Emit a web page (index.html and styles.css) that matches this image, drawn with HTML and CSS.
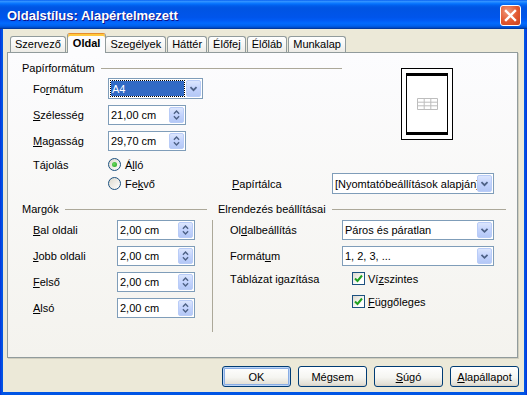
FILE: index.html
```html
<!DOCTYPE html>
<html lang="hu">
<head>
    <meta charset="utf-8">
    <title>Oldalstílus: Alapértelmezett</title>
    <link rel="stylesheet" href="styles.css">
</head>
<body>

    <div class="window">

        <div class="titlebar">
            <span class="title">Oldalstílus: Alapértelmezett</span>
            <button class="close" type="button">
                <svg width="13" height="13" viewBox="0 0 13 13"><path d="M2 2 L11 11 M11 2 L2 11" stroke="#fff" stroke-width="2.4" stroke-linecap="square" fill="none"/></svg>
            </button>
        </div>

        <div class="client">

            <div class="tabs">
                <div class="tab">Szervező</div>
                <div class="tab active">Oldal</div>
                <div class="tab">Szegélyek</div>
                <div class="tab">Háttér</div>
                <div class="tab">Élőfej</div>
                <div class="tab">Élőláb</div>
                <div class="tab">Munkalap</div>
            </div>

            <div class="panel">

                <div class="paper-top">
                    <div class="paper-fields">
                        <div class="group-head">Papírformátum</div>

                        <div class="row row-format">
                            <span class="lbl">Fo<u>r</u>mátum</span>
                            <div class="combo">
                                <div class="val selected"><span class="focus">A4</span></div>
                                <div class="drop">
                                    <svg width="15" height="17" viewBox="0 0 15 17"><polyline points="4,7 7.5,10.5 11,7" stroke="#4D6185" stroke-width="2" fill="none"/></svg>
                                </div>
                            </div>
                        </div>

                        <div class="row row-field">
                            <span class="lbl"><u>S</u>zélesség</span>
                            <div class="spin">
                                <span class="val">21,00 cm</span>
                                <div class="arrows">
                                    <svg width="15" height="16" viewBox="0 0 15 16"><polyline points="4.5,6.5 7.5,3.5 10.5,6.5" stroke="#4D6185" stroke-width="1.6" fill="none"/><polyline points="4.5,9.5 7.5,12.5 10.5,9.5" stroke="#4D6185" stroke-width="1.6" fill="none"/></svg>
                                </div>
                            </div>
                        </div>

                        <div class="row row-field">
                            <span class="lbl"><u>M</u>agasság</span>
                            <div class="spin">
                                <span class="val">29,70 cm</span>
                                <div class="arrows">
                                    <svg width="15" height="16" viewBox="0 0 15 16"><polyline points="4.5,6.5 7.5,3.5 10.5,6.5" stroke="#4D6185" stroke-width="1.6" fill="none"/><polyline points="4.5,9.5 7.5,12.5 10.5,9.5" stroke="#4D6185" stroke-width="1.6" fill="none"/></svg>
                                </div>
                            </div>
                        </div>

                        <div class="row row-orient">
                            <span class="lbl">Tájolás</span>
                            <span class="radio-item"><span class="radio checked"></span>Á<u>l</u>ló</span>
                        </div>
                    </div>

                    <div class="preview">
                        <div class="preview-page">
                            <svg width="21" height="12" viewBox="0 0 21 12">
                                <path d="M0.5 0.5 H20.5 V11.5 H0.5 Z M0.5 4.2 H20.5 M0.5 7.8 H20.5 M7.2 0.5 V11.5 M13.8 0.5 V11.5" stroke="#BDBDBD" stroke-width="1" fill="none"/>
                            </svg>
                        </div>
                    </div>
                </div>

                <div class="row-tray">
                    <span class="radio-item tray-radio"><span class="radio"></span>Fe<u>k</u>vő</span>
                    <span class="tray-lbl"><u>P</u>apírtálca</span>
                    <div class="combo tray">
                        <div class="val">[Nyomtatóbeállítások alapján]</div>
                        <div class="drop">
                            <svg width="15" height="17" viewBox="0 0 15 17"><polyline points="4,7 7.5,10.5 11,7" stroke="#4D6185" stroke-width="2" fill="none"/></svg>
                        </div>
                    </div>
                </div>

                <div class="lower">

                    <div class="margins">
                        <div class="group-head">Margók</div>

                        <div class="row row-margin first">
                            <span class="lbl"><u>B</u>al oldali</span>
                            <div class="spin">
                                <span class="val">2,00 cm</span>
                                <div class="arrows">
                                    <svg width="15" height="16" viewBox="0 0 15 16"><polyline points="4.5,6.5 7.5,3.5 10.5,6.5" stroke="#4D6185" stroke-width="1.6" fill="none"/><polyline points="4.5,9.5 7.5,12.5 10.5,9.5" stroke="#4D6185" stroke-width="1.6" fill="none"/></svg>
                                </div>
                            </div>
                        </div>

                        <div class="row row-margin">
                            <span class="lbl"><u>J</u>obb oldali</span>
                            <div class="spin">
                                <span class="val">2,00 cm</span>
                                <div class="arrows">
                                    <svg width="15" height="16" viewBox="0 0 15 16"><polyline points="4.5,6.5 7.5,3.5 10.5,6.5" stroke="#4D6185" stroke-width="1.6" fill="none"/><polyline points="4.5,9.5 7.5,12.5 10.5,9.5" stroke="#4D6185" stroke-width="1.6" fill="none"/></svg>
                                </div>
                            </div>
                        </div>

                        <div class="row row-margin">
                            <span class="lbl"><u>F</u>első</span>
                            <div class="spin">
                                <span class="val">2,00 cm</span>
                                <div class="arrows">
                                    <svg width="15" height="16" viewBox="0 0 15 16"><polyline points="4.5,6.5 7.5,3.5 10.5,6.5" stroke="#4D6185" stroke-width="1.6" fill="none"/><polyline points="4.5,9.5 7.5,12.5 10.5,9.5" stroke="#4D6185" stroke-width="1.6" fill="none"/></svg>
                                </div>
                            </div>
                        </div>

                        <div class="row row-margin">
                            <span class="lbl"><u>A</u>lsó</span>
                            <div class="spin">
                                <span class="val">2,00 cm</span>
                                <div class="arrows">
                                    <svg width="15" height="16" viewBox="0 0 15 16"><polyline points="4.5,6.5 7.5,3.5 10.5,6.5" stroke="#4D6185" stroke-width="1.6" fill="none"/><polyline points="4.5,9.5 7.5,12.5 10.5,9.5" stroke="#4D6185" stroke-width="1.6" fill="none"/></svg>
                                </div>
                            </div>
                        </div>
                    </div>

                    <div class="sep"></div>

                    <div class="layout">
                        <div class="group-head">Elrendezés beállításai</div>

                        <div class="row row-layout first">
                            <span class="lbl">Ol<u>d</u>albeállítás</span>
                            <div class="combo wide">
                                <div class="val">Páros és páratlan</div>
                                <div class="drop">
                                    <svg width="15" height="17" viewBox="0 0 15 17"><polyline points="4,6.5 7.5,10 11,6.5" stroke="#4D6185" stroke-width="2" fill="none"/></svg>
                                </div>
                            </div>
                        </div>

                        <div class="row row-layout">
                            <span class="lbl">Formát<u>u</u>m</span>
                            <div class="combo wide">
                                <div class="val">1, 2, 3, ...</div>
                                <div class="drop">
                                    <svg width="15" height="17" viewBox="0 0 15 17"><polyline points="4,6.5 7.5,10 11,6.5" stroke="#4D6185" stroke-width="2" fill="none"/></svg>
                                </div>
                            </div>
                        </div>

                        <div class="row row-check">
                            <span class="lbl">Táblázat igazítása</span>
                            <span class="check-item">
                                <span class="check"><svg width="11" height="11" viewBox="0 0 11 11"><polyline points="2,5.5 4.5,8 9,2.5" stroke="#21A121" stroke-width="2" fill="none"/></svg></span>Ví<u>z</u>szintes
                            </span>
                        </div>

                        <div class="row row-check second">
                            <span class="check-item">
                                <span class="check"><svg width="11" height="11" viewBox="0 0 11 11"><polyline points="2,5.5 4.5,8 9,2.5" stroke="#21A121" stroke-width="2" fill="none"/></svg></span><u>F</u>üggőleges
                            </span>
                        </div>
                    </div>

                </div>

            </div>

            <div class="buttons">
                <button class="btn default" type="button">OK</button>
                <button class="btn" type="button">Mégsem</button>
                <button class="btn" type="button"><u>S</u>úgó</button>
                <button class="btn" type="button"><u>A</u>lapállapot</button>
            </div>

        </div>

    </div>

</body>
</html>
```

FILE: styles.css
```css
* {
    box-sizing: border-box;
}

html,
body {
    margin: 0;
}

body {
    width: 527px;
    height: 395px;
    font: 11px "Liberation Sans", Arial, sans-serif;
    color: #000;
    background: #fff;
}

u {
    text-decoration: underline;
    text-underline-offset: 1px;
}

.window {
    width: 527px;
    height: 395px;
    display: flex;
    flex-direction: column;
    background: linear-gradient(to right, #0831D9, #0055E5 2px, #0055E5 calc(100% - 2px), #0831D9);
}

/* title bar */
.titlebar {
    flex: none;
    height: 29px;
    display: flex;
    align-items: center;
    justify-content: space-between;
    padding: 0 6px 0 7px;
    background: linear-gradient(#0058EE 0%, #3593FF 4%, #288EFF 7%, #127DFF 10%, #036FFC 14%, #0262EE 18%, #0057E5 24%, #0054E3 30%, #0055EB 60%, #005BF5 70%, #026AFE 80%, #0062EF 88%, #0052D6 94%, #0040AB 97%, #003092 100%);
}

.title {
    color: #fff;
    font-weight: bold;
    font-size: 13px;
    padding-top: 1px;
    text-shadow: 1px 1px 0 #0F1089;
}

.close {
    width: 21px;
    height: 21px;
    padding: 0;
    margin-top: 1px;
    display: flex;
    align-items: center;
    justify-content: center;
    border: 1px solid #fff;
    border-radius: 3px;
    background: radial-gradient(circle at 35% 30%, #F0997C, #E2582F 55%, #C8421F);
}

/* client area */
.client {
    flex: 1;
    margin: 0 3px 3px;
    display: flex;
    flex-direction: column;
    background: #ECE9D8;
}

.tabs {
    position: relative;
    z-index: 1;
    display: flex;
    align-items: flex-end;
    height: 20px;
    margin: 4px 0 0 7px;
}

.tab {
    height: 16px;
    margin: 0 1px 1px 0;
    padding: 0 4px;
    border: 1px solid #919B9C;
    border-bottom: none;
    border-radius: 3px 3px 0 0;
    background: linear-gradient(#fff, #F7F7F5 50%, #ECEBE6);
    line-height: 15px;
    white-space: nowrap;
}

.tab.active {
    height: 20px;
    margin: 0 -1px 0 0;
    padding: 0 5px;
    border-top-color: #E68B2C;
    background: #FCFCFE;
    box-shadow: inset 0 2px 0 #FFC83C;
    font-weight: bold;
    line-height: 19px;
}

.panel {
    height: 306px;
    margin: -1px 6px 0 4px;
    border: 1px solid #919B9C;
    background: linear-gradient(#FCFCFE, #F4F3EE);
    box-shadow: 1px 1px 0 #D0CEBF;
}

.group-head {
    display: flex;
    align-items: center;
    height: 13px;
    line-height: 13px;
    white-space: nowrap;
}
.group-head::after {
    content: "";
    flex: 1;
    margin-left: 6px;
    border-top: 1px solid #ACA899;
}

.row {
    display: flex;
    align-items: center;
    padding-left: 11px;
}
.lbl {
    flex: none;
    white-space: nowrap;
}

/* paper format */
.paper-top {
    display: flex;
}
.paper-fields {
    width: 320px;
    margin-left: 14px;
}
.paper-fields .group-head {
    margin-top: 9px;
}
.paper-fields .lbl {
    width: 75px;
}
.row-format {
    height: 21px;
    margin-top: 3px;
}
.row-field {
    height: 20px;
    margin-top: 6px;
}
.row-orient {
    height: 17px;
    margin-top: 5px;
}

.preview {
    width: 52px;
    height: 72px;
    margin: 15px 0 0 59px;
    padding: 4px;
    border: 1px solid #000;
    background: #fff;
}
.preview-page {
    height: 100%;
    display: flex;
    align-items: center;
    justify-content: center;
    border: solid #000;
    border-width: 3px 1px;
}

.row-tray {
    display: flex;
    align-items: center;
    height: 21px;
    padding-left: 100px;
}
.tray-radio {
    width: 124px;
}
.tray-lbl {
    width: 100px;
}

/* controls */
.combo {
    display: flex;
    width: 95px;
    height: 21px;
    padding: 1px;
    border: 1px solid #7F9DB9;
    background: #fff;
}
.combo .val {
    flex: 1;
    display: flex;
    align-items: center;
    padding-left: 1px;
    overflow: hidden;
    white-space: nowrap;
}
.combo .val.selected {
    padding: 0;
    margin-right: 1px;
}
.focus {
    flex: 1;
    align-self: stretch;
    display: flex;
    align-items: center;
    padding-left: 1px;
    border: 1px dotted #000;
    background: #316AC5;
    background-clip: padding-box;
    color: #fff;
}
.combo.tray {
    width: 162px;
}
.combo.wide {
    width: 152px;
    height: 20px;
}

.drop,
.arrows {
    flex: none;
    width: 15px;
    display: flex;
    align-items: center;
    justify-content: center;
    border: 1px solid #B9CCF7;
    border-radius: 2px;
    background: linear-gradient(#DCE6FD, #C3D3FD 50%, #B4C8F6);
}

.spin {
    display: flex;
    width: 78px;
    height: 20px;
    padding: 1px;
    border: 1px solid #7F9DB9;
    background: #fff;
}
.spin .val {
    flex: 1;
    display: flex;
    align-items: center;
    padding-left: 1px;
}
.arrows svg {
    display: block;
}

.radio-item,
.check-item {
    display: flex;
    align-items: center;
    white-space: nowrap;
}
.radio {
    width: 13px;
    height: 13px;
    margin-right: 4px;
    display: flex;
    align-items: center;
    justify-content: center;
    border: 1px solid #1C5180;
    border-radius: 50%;
    background: linear-gradient(135deg, #DCD9CD, #fff);
}
.radio.checked::after {
    content: "";
    width: 5px;
    height: 5px;
    border-radius: 50%;
    background: radial-gradient(circle at 40% 40%, #6BDA5E, #21A121);
}

.check {
    width: 13px;
    height: 13px;
    margin-right: 3px;
    display: flex;
    align-items: center;
    justify-content: center;
    border: 1px solid #1C5180;
    background: linear-gradient(135deg, #DCD9CD, #fff 70%);
}

/* margins + layout */
.lower {
    display: flex;
    margin-top: 9px;
}
.margins {
    width: 185px;
    margin-left: 14px;
}
.margins .lbl {
    width: 84px;
}
.row-margin {
    height: 20px;
    margin-top: 6px;
}
.row-margin.first,
.row-layout.first {
    margin-top: 4px;
}

.sep {
    width: 1px;
    height: 112px;
    margin: 17px 0 0 5px;
    background: #ACA899;
}

.layout {
    width: 288px;
    margin-left: 5px;
}
.layout .row {
    padding-left: 12px;
}
.layout .row-layout .lbl {
    width: 112px;
}
.row-layout {
    height: 20px;
    margin-top: 6px;
}
.row-check {
    height: 13px;
    margin-top: 6px;
}
.row-check .lbl {
    width: 122px;
}
.layout .row-check.second {
    margin-top: 10px;
    padding-left: 134px;
}

/* dialog buttons */
.buttons {
    display: flex;
    justify-content: flex-end;
    gap: 7px;
    margin: 8px 5px 0 0;
}
.btn {
    width: 69px;
    height: 21px;
    padding: 0;
    font: 11px "Liberation Sans", Arial, sans-serif;
    color: #000;
    border: 1px solid #003C74;
    border-radius: 3px;
    background: linear-gradient(#fff, #F5F5F1 55%, #E3E0D6 90%, #D6D0C5);
}
.btn.default {
    box-shadow: inset 0 0 0 1px #BCD4F6, inset 0 0 0 2px #89ADE4;
}
```
